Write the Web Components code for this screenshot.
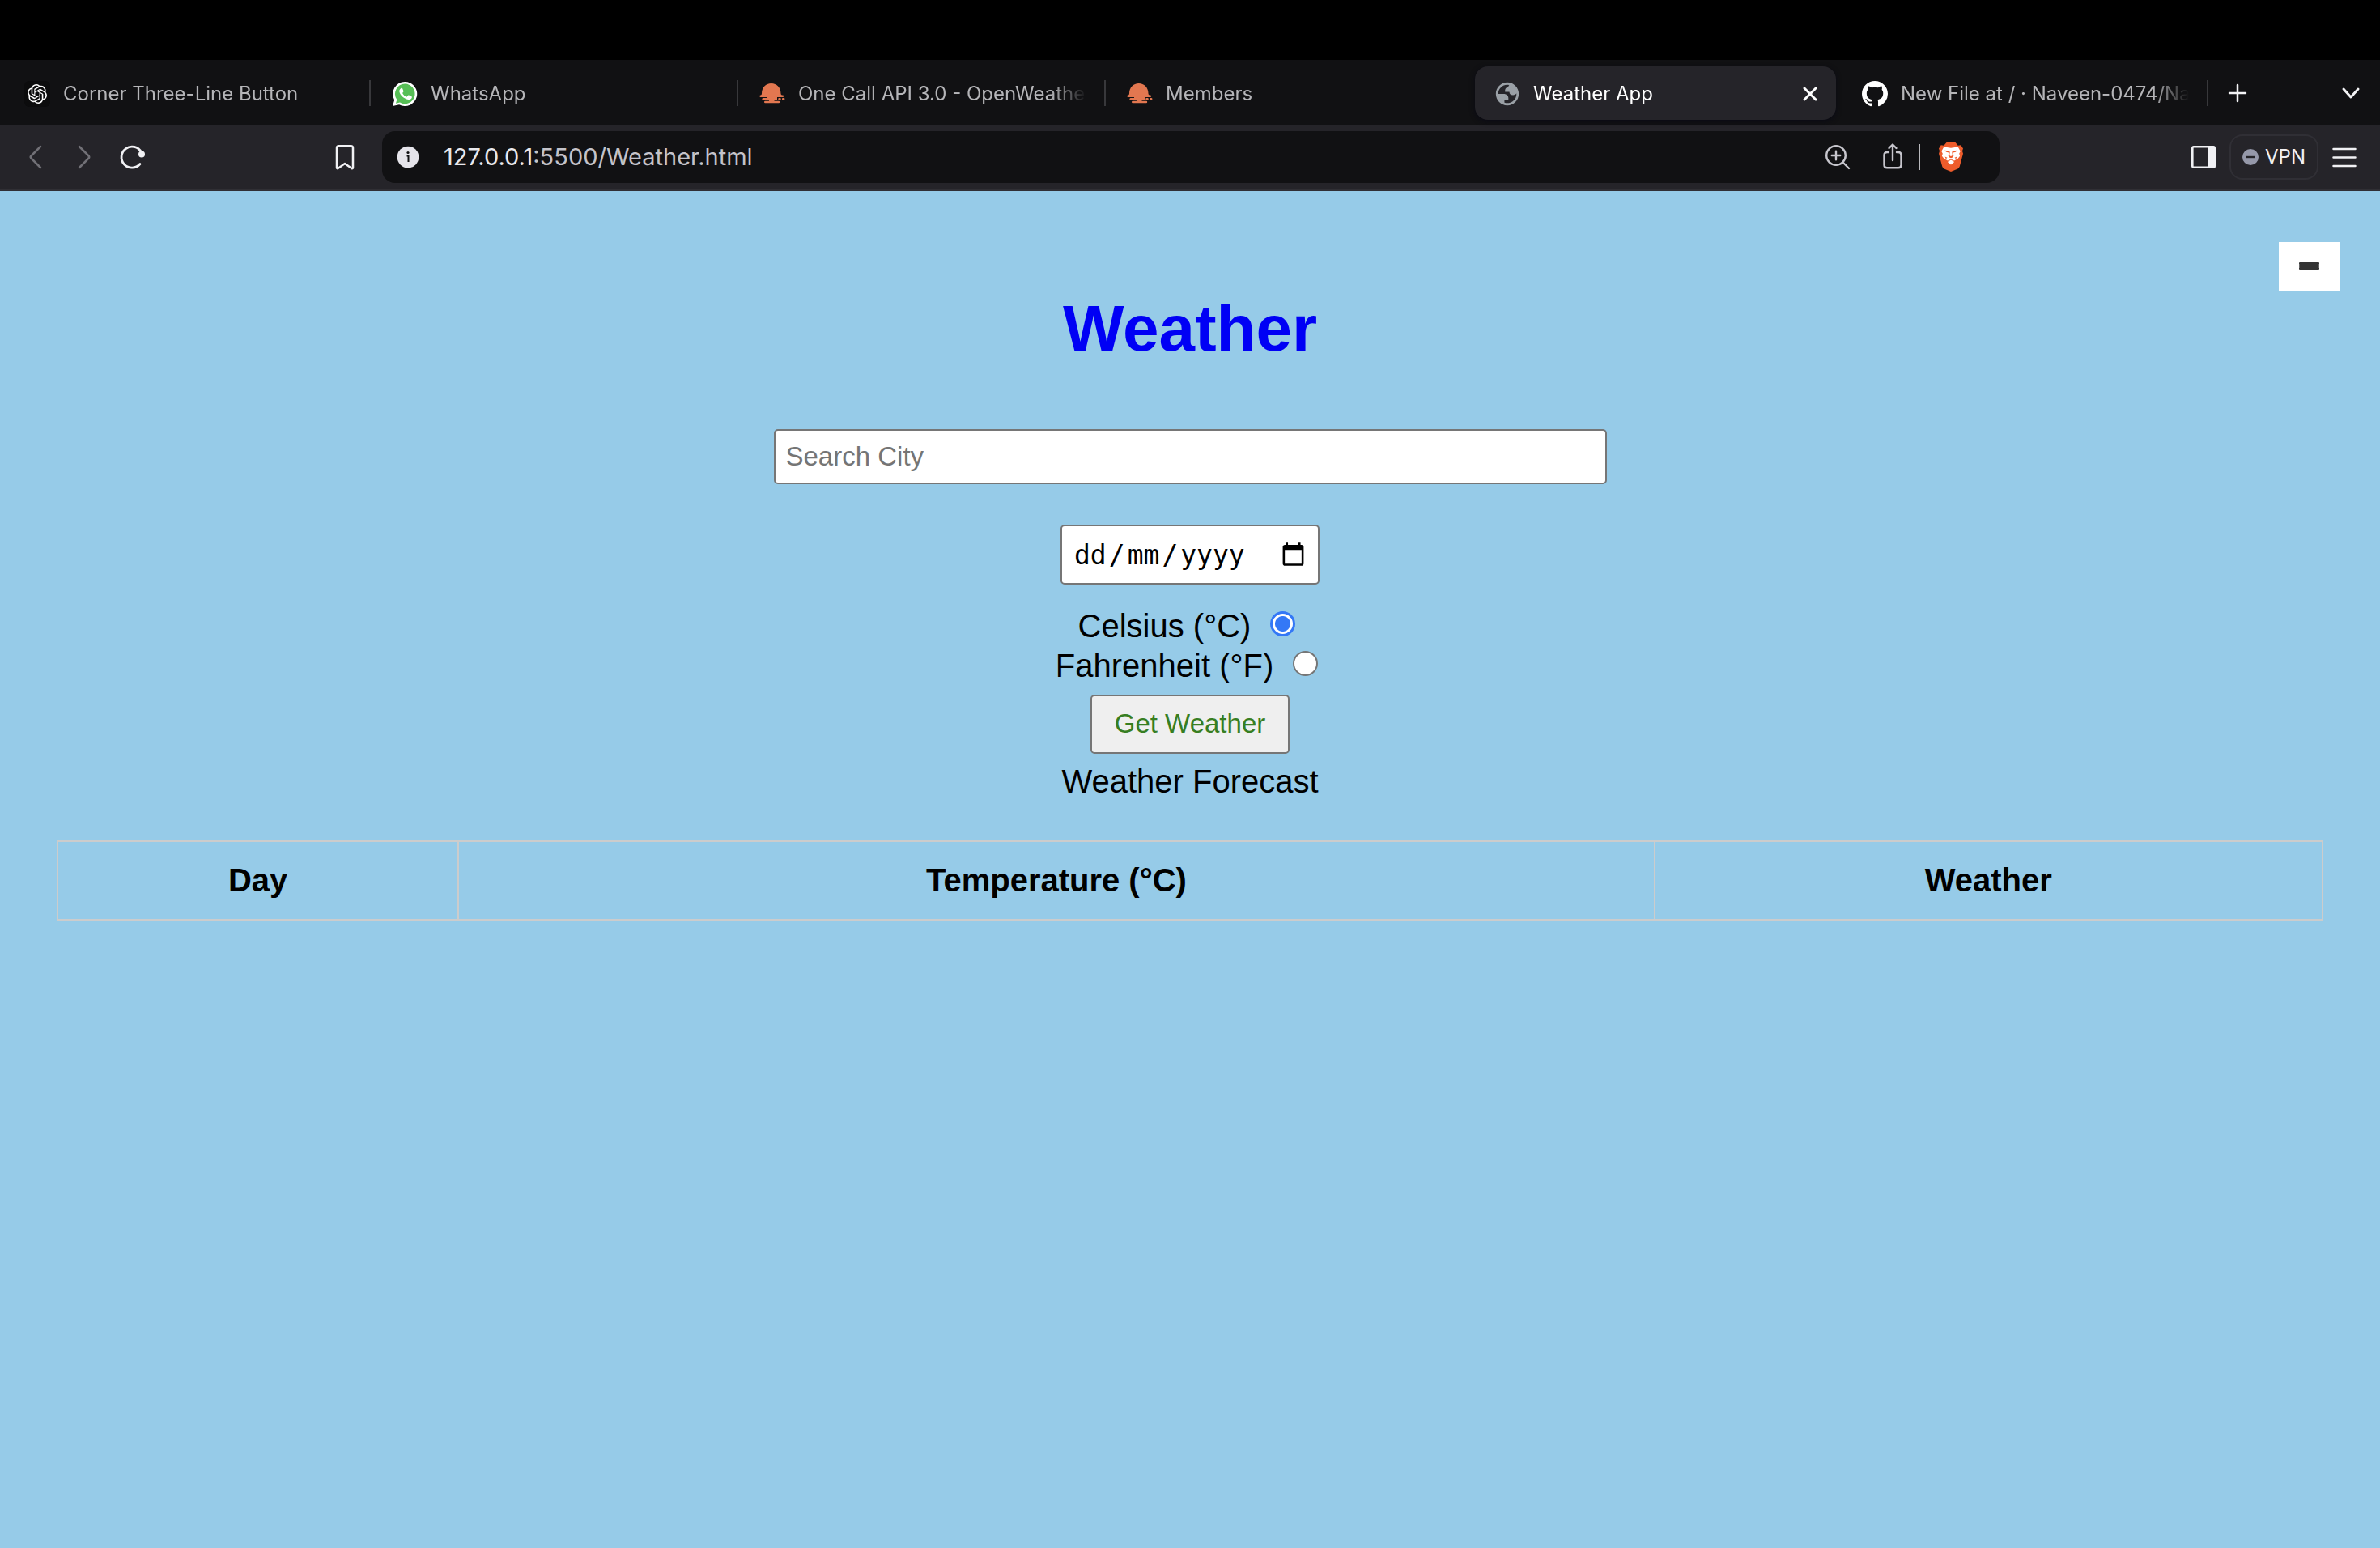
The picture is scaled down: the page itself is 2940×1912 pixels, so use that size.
<!DOCTYPE html>
<html lang="en-GB">
<head>
<meta charset="utf-8">
<title>Weather App</title>
<style>
  html, body { height: 100%; }
  body { margin: 0; background: #96cbe8; font-family: "Liberation Sans", Arial, sans-serif; }
</style>
</head>
<body>
<browser-window>
  <tab-strip slot="tabs">
    <browser-tab icon="openai" divided>Corner Three-Line Button</browser-tab>
    <browser-tab icon="whatsapp" divided>WhatsApp</browser-tab>
    <browser-tab icon="openweather" divided>One Call API 3.0 - OpenWeatherMap</browser-tab>
    <browser-tab icon="openweather">Members</browser-tab>
    <browser-tab icon="globe" active>Weather App</browser-tab>
    <browser-tab icon="github" divided>New File at / · Naveen-0474/Naveen</browser-tab>
  </tab-strip>
  <tool-bar slot="toolbar"></tool-bar>
  <weather-app></weather-app>
</browser-window>

<script>
const ICONS = {
  openai: `<svg viewBox="0 0 32 32" width="32" height="32"><rect width="32" height="32" rx="6" fill="#0c0c0d"/><g transform="translate(4 4)"><path fill="#fff" d="M22.2819 9.8211a5.9847 5.9847 0 0 0-.5157-4.9108 6.0462 6.0462 0 0 0-6.5098-2.9A6.0651 6.0651 0 0 0 4.9807 4.1818a5.9847 5.9847 0 0 0-3.9977 2.9 6.0462 6.0462 0 0 0 .7427 7.0966 5.98 5.98 0 0 0 .511 4.9107 6.051 6.051 0 0 0 6.5146 2.9001A5.9847 5.9847 0 0 0 13.2599 24a6.0557 6.0557 0 0 0 5.7718-4.2058 5.9894 5.9894 0 0 0 3.9977-2.9001 6.0557 6.0557 0 0 0-.7475-7.0729zm-9.022 12.6081a4.4755 4.4755 0 0 1-2.8764-1.0408l.1419-.0804 4.7783-2.7582a.7948.7948 0 0 0 .3927-.6813v-6.7369l2.02 1.1686a.071.071 0 0 1 .038.052v5.5826a4.504 4.504 0 0 1-4.4945 4.4944zm-9.6607-4.1254a4.4708 4.4708 0 0 1-.5346-3.0137l.142.0852 4.783 2.7582a.7712.7712 0 0 0 .7806 0l5.8428-3.3685v2.3324a.0804.0804 0 0 1-.0332.0615L9.74 19.9502a4.4992 4.4992 0 0 1-6.1408-1.6464zM2.3408 7.8956a4.485 4.485 0 0 1 2.3655-1.9728V11.6a.7664.7664 0 0 0 .3879.6765l5.8144 3.3543-2.0201 1.1685a.0757.0757 0 0 1-.071 0l-4.8303-2.7865A4.504 4.504 0 0 1 2.3408 7.872zm16.5963 3.8558L13.1038 8.364 15.1192 7.2a.0757.0757 0 0 1 .071 0l4.8303 2.7913a4.4944 4.4944 0 0 1-.6765 8.1042v-5.6772a.79.79 0 0 0-.407-.667zm2.0107-3.0231l-.142-.0852-4.7735-2.7818a.7759.7759 0 0 0-.7854 0L9.409 9.2297V6.8974a.0662.0662 0 0 1 .0284-.0615l4.8303-2.7866a4.4992 4.4992 0 0 1 6.6802 4.66zM8.3065 12.863l-2.02-1.1638a.0804.0804 0 0 1-.038-.0567V6.0742a4.4992 4.4992 0 0 1 7.3757-3.4537l-.142.0805L8.704 5.459a.7948.7948 0 0 0-.3927.6813zm1.0976-2.3654l2.602-1.4998 2.6069 1.4998v2.9994l-2.5974 1.4997-2.6067-1.4997Z"/></g></svg>`,
  whatsapp: `<svg viewBox="0 0 32 32" width="32" height="32"><path fill="#fff" d="M16 1a15 15 0 1 1-6.9 28.2L1 31l2.2-7.6A15 15 0 0 1 16 1z"/><path fill="#57bf56" d="M16.3 3.6a12.3 12.3 0 1 1-6.3 22.9L5 27.7l1.3-4.7A12.3 12.3 0 0 1 16.3 3.6z"/><path fill="#fff" d="M11.2 9.2c.5-.5 1.5-.5 1.9.1l1.4 3.2c.2.5 0 .9-1.4 2.4 1.2 2.3 3 3.9 5.3 4.9l1.7-2c.3-.4.7-.4 1.1-.2l3.3 1.6c.5.3.4 1.1.1 1.9-.7 1.6-2.7 2.3-4.3 2-5.6-1.3-10.3-5.8-11-10.1-.2-1.4.7-2.9 1.9-3.8z"/></svg>`,
  openweather: `<svg viewBox="0 0 32 32" width="32" height="32"><g fill="#e27750"><path d="M1.6 17.5Q3 17.5 3 15.5C3 8 8 3 14.7 3S26.5 8 26.5 15.5q0 2 1.6 2h.8a1.2 1.2 0 0 1 0 2.4H1.6a1.2 1.2 0 0 1 0-2.4z"/><rect x="3.5" y="21" width="10" height="2.4" rx="1.2"/><path d="M9 19.5h13v3.9h-3.5v1.4h5.5a1.2 1.2 0 0 1 0 2.4H7.2a1.2 1.2 0 0 1 0-2.4H12V21H9z"/><rect x="23.3" y="21" width="3.4" height="2.4" rx="1"/><rect x="28" y="21" width="3.4" height="2.4" rx="1"/></g></svg>`,
  globe: `<svg viewBox="0 0 24 24" width="34" height="34" style="margin:-1px"><path fill="#9aa0a6" fill-rule="evenodd" d="M12 2C6.48 2 2 6.48 2 12s4.48 10 10 10 10-4.48 10-10S17.52 2 12 2zM4 12h4.4c3.407.022 4.922 1.73 4.543 5.127H9.488v2.47a8.004 8.004 0 0 0 10.498-8.083C19.327 12.504 18.332 13 17 13c-2.137 0-3.206-.916-3.206-2.75h-3.748c-.274-2.728.683-4.092 2.87-4.092 0-.975.327-1.597.811-1.97A8.004 8.004 0 0 0 4 12z"/></svg>`,
  github: `<svg viewBox="0 0 16 16" width="32" height="32"><path fill="#fff" d="M8 0C3.58 0 0 3.58 0 8c0 3.54 2.29 6.53 5.47 7.59.4.07.55-.17.55-.38 0-.19-.01-.82-.01-1.49-2.01.37-2.53-.49-2.69-.94-.09-.23-.48-.94-.82-1.13-.28-.15-.68-.52-.01-.53.63-.01 1.08.58 1.23.82.72 1.21 1.87.87 2.33.66.07-.52.28-.87.51-1.07-1.78-.2-3.64-.89-3.64-3.95 0-.87.31-1.59.82-2.15-.08-.2-.36-1.02.08-2.12 0 0 .67-.21 2.2.82.64-.18 1.32-.27 2-.27s1.36.09 2 .27c1.53-1.04 2.2-.82 2.2-.82.44 1.1.16 1.92.08 2.12.51.56.82 1.27.82 2.15 0 3.07-1.87 3.75-3.65 3.95.29.25.54.73.54 1.48 0 1.07-.01 1.93-.01 2.2 0 .21.15.46.55.38A8.01 8.01 0 0 0 16 8c0-4.42-3.58-8-8-8z"/></svg>`
};

function define(name, markup, setup) {
  const template = document.createElement('template');
  template.innerHTML = markup;
  customElements.define(name, class extends HTMLElement {
    constructor() {
      super();
      this.attachShadow({ mode: 'open' }).append(template.content.cloneNode(true));
    }
    connectedCallback() { if (setup) setup(this, this.shadowRoot); }
  });
}

define('browser-window', `
  <style>
    :host { display: flex; flex-direction: column; min-height: 100%; }
    header { padding-top: 74px; background: #000; font-family: Inter, sans-serif; }
    main { flex: 1; }
  </style>
  <header><slot name="tabs"></slot><slot name="toolbar"></slot></header>
  <main><slot></slot></main>`);

define('tab-strip', `
  <style>
    :host { display: flex; align-items: center; box-sizing: border-box; height: 80px; padding: 2px 24px 0 4px; background: #111113; }
    button { display: flex; align-items: center; justify-content: center; width: 24px; height: 32px; padding: 0; border: 0; background: none; }
    .new { margin-left: 24px; }
    .search { margin-left: auto; }
  </style>
  <slot></slot>
  <button class="new" aria-label="New tab"><svg width="24" height="24" fill="none" stroke="#f4f4f6" stroke-width="2.5" stroke-linecap="round"><path d="M12 2v20M2 12h20"/></svg></button>
  <button class="search" aria-label="Search tabs"><svg width="24" height="24" fill="none" stroke="#f4f4f6" stroke-width="3" stroke-linecap="round" stroke-linejoin="round"><path d="M3 7l9 10 9-10"/></svg></button>`);

define('browser-tab', `
  <style>
    :host { box-sizing: border-box; display: flex; align-items: center; flex: 0 1 454px; min-width: 0; height: 66px; padding: 0 2px 0 0; color: #b5b5b8; font-size: 24px; line-height: 32px; }
    .tab { display: flex; align-items: center; gap: 16px; flex: 1; min-width: 0; height: 66px; box-sizing: border-box; padding: 2px 22px 0 26px; border-radius: 16px; }
    .icon { display: flex; flex: none; width: 32px; height: 32px; }
    .label { flex: 1; overflow: hidden; white-space: nowrap; mask-image: linear-gradient(to right, #000 calc(100% - 44px), transparent); }
    .divider { flex: none; width: 2px; height: 32px; background: #38383b; margin-right: -2px; visibility: hidden; }
    :host([divided]) .divider { visibility: visible; }
    button { display: none; width: 24px; height: 24px; padding: 0; border: 0; background: none; }
    :host([active]) { color: #fff; }
    :host([active]) .tab { margin: 0 4px 0 2px; padding-left: 24px; padding-right: 20px; background: #252429; box-shadow: 0 2px 6px #0a0a14; }
    :host([active]) button { display: flex; align-items: center; justify-content: center; }
  </style>
  <div class="tab"><span class="icon"></span><span class="label"><slot></slot></span><button aria-label="Close tab"><svg width="18" height="18" fill="none" stroke="#fff" stroke-width="3" stroke-linecap="round"><path d="M2 2l14 14M16 2L2 16"/></svg></button></div>
  <div class="divider"></div>`,
  (host, root) => { root.querySelector('.icon').innerHTML = ICONS[host.getAttribute('icon')] || ''; });

define('tool-bar', `
  <style>
    :host { display: flex; align-items: center; box-sizing: border-box; height: 82px; padding: 0 28px; background: #252429; border-bottom: 2px solid #302f34; }
    button { display: flex; align-items: center; justify-content: center; flex: none; width: 32px; height: 36px; padding: 0; border: 0; background: none; font: inherit; }
    svg { display: block; }
    .nav { display: flex; gap: 28px; }
    .mark { margin: 0 30px 0 230px; }
    .address { display: flex; align-items: center; flex: 1; height: 64px; box-sizing: border-box; padding: 0 44px 0 16px; border-radius: 16px; background: #111113; }
    .url { flex: 1; margin-left: 28px; font-size: 29px; line-height: 36px; color: #c4c3ca; }
    .url b { font-weight: 400; color: #e8e8ec; }
    .share { margin-left: 36px; }
    .rule { width: 2px; height: 32px; margin: 0 22px 0 16px; background: #b9b9bd; }
    .side { margin-left: 236px; }
    button.vpn { width: auto; height: 56px; margin: 0 16px 0 16px; padding: 0 14px; gap: 8px; border: 2px solid #302f35; border-radius: 16px; color: #f0f0f4; font-size: 24px; line-height: 32px; }
  </style>
  <div class="nav">
    <button aria-label="Back"><svg width="32" height="32" fill="none" stroke="#717076" stroke-width="2.5" stroke-linecap="round" stroke-linejoin="round"><path d="M22 3L10.5 14.5q-1.5 1.5 0 3L22 29"/></svg></button>
    <button aria-label="Forward"><svg width="32" height="32" fill="none" stroke="#717076" stroke-width="2.5" stroke-linecap="round" stroke-linejoin="round"><path d="M10 3L21.5 14.5q1.5 1.5 0 3L10 29"/></svg></button>
    <button aria-label="Reload"><svg width="32" height="32"><path d="M25 24.5A13 13 0 1 1 26.5 10" fill="none" stroke="#f1f1f4" stroke-width="2.8" stroke-linecap="round"/><circle cx="27" cy="12.5" r="4" fill="#f1f1f4"/></svg></button>
  </div>
  <button class="mark" aria-label="Bookmark"><svg width="32" height="32" fill="none" stroke="#f1f1f4" stroke-width="2.5" stroke-linejoin="round"><path d="M8.5 2.2h15q2.5 0 2.5 2.5V29q0 1.5-1.5 1L16 24l-8.5 6Q6 30.5 6 29V4.7q0-2.5 2.5-2.5z"/></svg></button>
  <div class="address">
    <button aria-label="Site information"><svg width="32" height="32"><circle cx="16" cy="16" r="13.3" fill="#e5e4ea"/><circle cx="16" cy="10.5" r="1.6" fill="#111113"/><path d="M14.5 14.5H16.5V22" fill="none" stroke="#111113" stroke-width="2"/></svg></button>
    <span class="url"><b>127.0.0.1</b>:5500/Weather.html</span>
    <button aria-label="Zoom"><svg width="32" height="32" fill="none" stroke="#c7c6cd" stroke-width="2.4" stroke-linecap="round"><circle cx="14" cy="14" r="11.8"/><path d="M22.5 22.5L30 30M14 8.8v10.4M8.8 14h10.4"/></svg></button>
    <button class="share" aria-label="Share"><svg width="32" height="36" fill="none" stroke="#c7c6cd" stroke-width="2.4" stroke-linecap="round" stroke-linejoin="round"><path d="M11 12H9q-3.5 0-3.5 3.5v12.3q0 3.5 3.5 3.5h14q3.5 0 3.5-3.5V15.5q0-3.5-3.5-3.5h-2M16 22V3M11.5 7L16 2.5 20.5 7"/></svg></button>
    <span class="rule"></span>
    <button aria-label="Brave Shields"><svg width="32" height="36" viewBox="0 0 32 36"><path fill="#ee5c2b" d="M10.5 0h11l3.2 3.7 3.6-.4 2.7 4.2-1 3 1 3.3-4.2 15.7q-.7 2-2.3 3L16 36l-8.5-3.5q-1.6-1-2.3-3L1 13.8l1-3.3-1-3 2.7-4.2 3.6.4z"/><path fill="#fff" d="M9.5 5.8l6.5.9 6.5-.9 2.5.3 2.7 4.7-1.5 3 .9 3-2.6 3.2-4.5 2.6L16 20.4l-4 2.2-4.5-2.6-2.6-3.2.9-3-1.5-3L7 6.1zM16 21.6l4.2 2.3L16 27.5l-4.2-3.6z"/><path fill="#ee5c2b" d="M8 9.8l5.5.5 1.2 1.5-.6 4.2 1.9 1 1.9-1-.6-4.2 1.2-1.5 5.500-.5-2.200 2-3 .8.5 3.800-1.300 2L16 19.200l-2-.8-1.300-2 .5-3.800-3-.8zM8.500 17.500l3 1.300-1.700 1.400zM23.500 17.500l-3 1.300 1.700 1.400z"/></svg></button>
  </div>
  <button class="side" aria-label="Sidebar"><svg width="32" height="32"><rect x="2.3" y="3.3" width="27.4" height="25.4" rx="1.5" fill="none" stroke="#f1f1f4" stroke-width="2.6"/><path fill="#f1f1f4" d="M21.5 3H30v26h-8.5z"/></svg></button>
  <button class="vpn"><svg width="20" height="20"><circle cx="10" cy="10" r="10" fill="#9598a9"/><path d="M4 10h12" stroke="#252429" stroke-width="2.4"/></svg>VPN</button>
  <button aria-label="Menu"><svg width="32" height="32" stroke="#f1f1f4" stroke-width="2.5" stroke-linecap="round"><path d="M2.5 6h27M2.5 16.5h27M2.5 27h27"/></svg></button>`);

define('menu-button', `
  <style>
    :host { display: block; }
    button { display: flex; flex-direction: column; align-items: center; justify-content: center; width: 75px; height: 60px; padding: 0 0 1px; border: 0; background: #fff; }
    span { width: 25px; height: 3px; border-radius: 1px; background: #333; }
  </style>
  <button aria-label="Menu"><span></span><span></span><span></span></button>`);

define('unit-option', `
  <style>
    :host { display: block; line-height: 49px; }
    label { display: flex; align-items: flex-start; justify-content: center; gap: 24px; }
    input { appearance: none; box-sizing: border-box; width: 31px; height: 31px; margin: 6px 8px 0 0; border: 2px solid #767676; border-radius: 50%; background: #fff; }
    input:checked { border: 3px solid #3478f6; background: radial-gradient(circle, #3478f6 9px, #fff 10px); }
  </style>
  <label><slot></slot><input type="radio" name="unit"></label>`,
  (host, root) => { root.querySelector('input').checked = host.hasAttribute('checked'); });

define('forecast-table', `
  <style>
    :host { display: block; }
    table { width: 100%; border-collapse: collapse; table-layout: fixed; line-height: 47px; }
    th { box-sizing: border-box; padding: 24px; border: 2px solid #ccc; }
    .day { width: 17.7%; }
    .weather { width: 29.5%; }
  </style>
  <table><thead><tr><th class="day" scope="col">Day</th><th scope="col">Temperature (°C)</th><th class="weather" scope="col">Weather</th></tr></thead></table>`);

define('weather-app', `
  <style>
    :host { display: block; padding: 63px 70px 0; font-size: 40px; color: #000; text-align: center; }
    .top { display: flex; justify-content: flex-end; margin-right: -20px; }
    h1 { margin: 0 0 77px; font-size: 80px; line-height: 94px; color: #0000f5; }
    form { display: flex; flex-direction: column; align-items: center; }
    input { box-sizing: border-box; border: 2px solid #767676; border-radius: 5px; background: #fff; }
    #city { width: 35vw; height: 68px; padding: 0 13px; font: 33px "Liberation Sans", Arial, sans-serif; }
    #city::placeholder { color: #757575; }
    #date { width: 320px; height: 74px; margin: 50px 0 27px; padding: 0 14px; font: 33px "DejaVu Sans Mono", monospace; color: #000; }
    #date::-webkit-datetime-edit { padding: 0; }
    #date::-webkit-datetime-edit-fields-wrapper { display: grid; grid-auto-flow: row; grid-template-columns: repeat(5, max-content); padding: 0; }
    #date::-webkit-datetime-edit-day-field { grid-area: 1 / 1; padding: 0 1px; }
    #date::-webkit-datetime-edit-month-field { grid-area: 1 / 3; padding: 0 1px; }
    #date::-webkit-datetime-edit-year-field { grid-area: 1 / 5; padding: 0 1px; }
    #date::-webkit-datetime-edit-text { padding: 0 2px; }
    #date::-webkit-calendar-picker-indicator { width: 33px; height: 33px; padding: 0; margin: 0 0 0 38px; }
    button { height: 73px; margin: 11px 0 10px; padding: 0 28px 2px; border: 2px solid #767676; border-radius: 5px; background: #efefef; color: #377e22; font: 33px "Liberation Sans", Arial, sans-serif; }
    p { margin: 0 0 48px; line-height: 49px; }
  </style>
  <div class="top"><menu-button></menu-button></div>
  <h1>Weather</h1>
  <form>
    <input id="city" type="text" placeholder="Search City" aria-label="Search City">
    <input id="date" type="date" aria-label="Date">
    <unit-option checked>Celsius (°C)</unit-option>
    <unit-option>Fahrenheit (°F)</unit-option>
    <button type="button">Get Weather</button>
  </form>
  <p>Weather Forecast</p>
  <forecast-table></forecast-table>`);
</script>
</body>
</html>
